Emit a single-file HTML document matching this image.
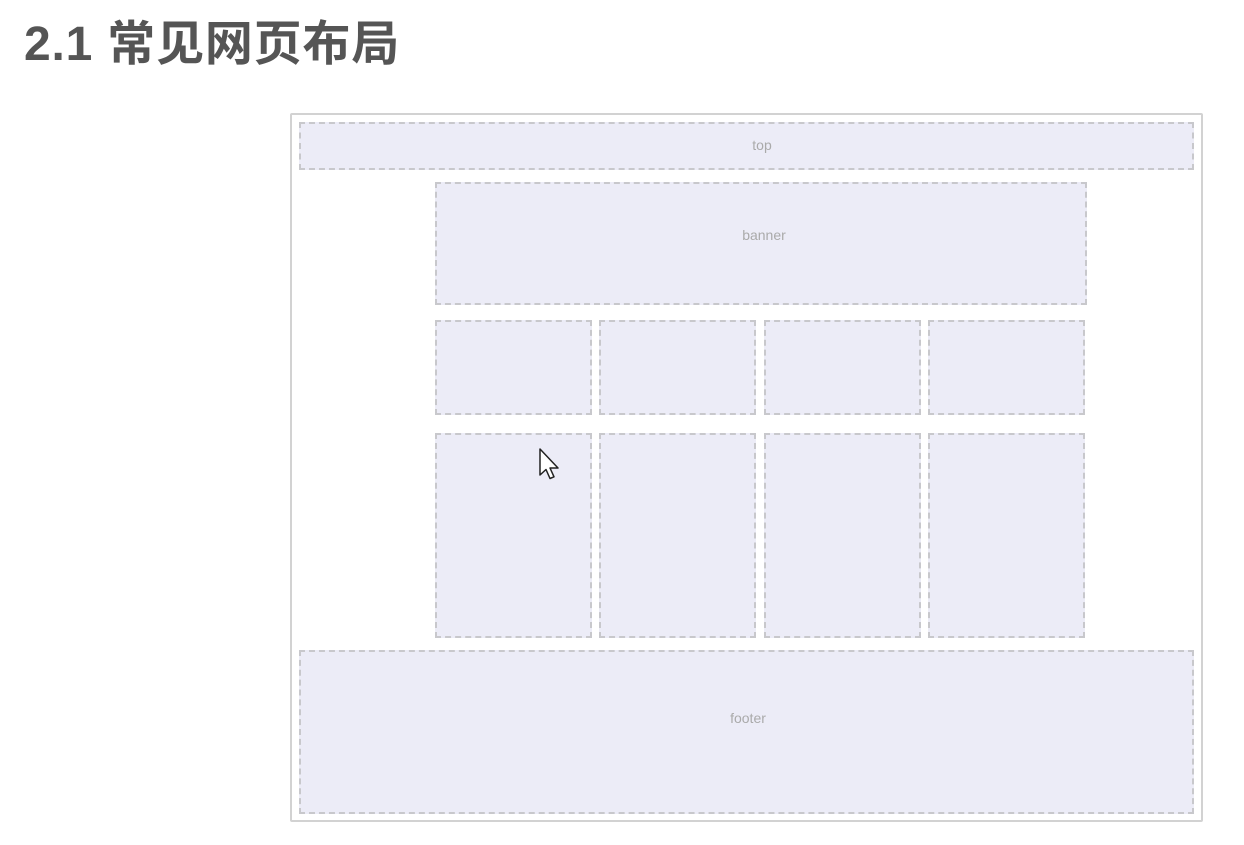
<!DOCTYPE html>
<html><head><meta charset="utf-8"><style>
body{margin:0;width:1244px;height:845px;background:#fff;position:relative;overflow:hidden;font-family:"Liberation Sans","Noto Sans CJK SC",sans-serif}
h1{position:absolute;left:24px;top:14px;margin:0;font-size:48px;font-weight:bold;color:#555;line-height:62px;letter-spacing:0.8px}
.o{position:absolute;left:290px;top:113px;width:909px;height:705px;border:2px solid #d2d2d2;border-radius:2px}
.b{position:absolute;box-sizing:border-box;background:#ececf7;border:2px dashed #c8c8cc}
.t{position:absolute;color:#aaa;font-size:14px;line-height:16px;transform:translateX(-50%)}
</style></head><body>
<h1>2.1 常见网页布局</h1>
<div class="o"></div>
<div class="b" style="left:299px;top:122px;width:895px;height:48px"></div>
<div class="b" style="left:435px;top:182px;width:652px;height:123px"></div>
<div class="b" style="left:435px;top:320px;width:157px;height:95px"></div>
<div class="b" style="left:599px;top:320px;width:157px;height:95px"></div>
<div class="b" style="left:764px;top:320px;width:157px;height:95px"></div>
<div class="b" style="left:928px;top:320px;width:157px;height:95px"></div>
<div class="b" style="left:435px;top:433px;width:157px;height:205px"></div>
<div class="b" style="left:599px;top:433px;width:157px;height:205px"></div>
<div class="b" style="left:764px;top:433px;width:157px;height:205px"></div>
<div class="b" style="left:928px;top:433px;width:157px;height:205px"></div>
<div class="b" style="left:299px;top:650px;width:895px;height:164px"></div>
<div class="t" style="left:762px;top:137px">top</div>
<div class="t" style="left:764px;top:227px">banner</div>
<div class="t" style="left:748px;top:710px">footer</div>
<svg style="position:absolute;left:538px;top:447px" width="26" height="38" viewBox="0 0 26 38"><path d="M2 2 L2 28 L8 22.5 L12 31.5 L16 29.8 L12 21 L20 21 Z" fill="#fff" stroke="#222" stroke-width="1.5" stroke-linejoin="round"/></svg>
</body></html>
